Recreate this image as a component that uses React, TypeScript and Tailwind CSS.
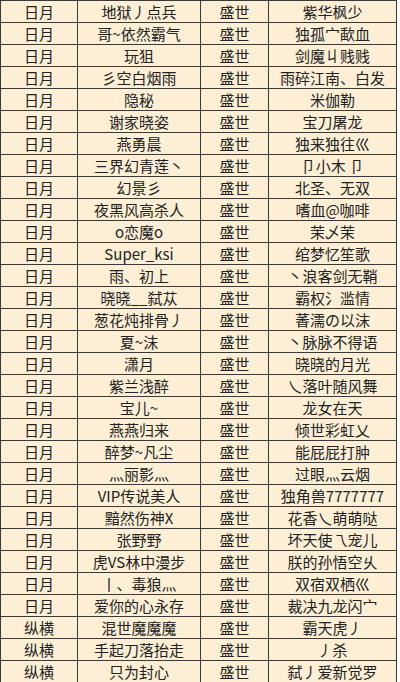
const rows: [string, string, string, string][] = [
  ['日月', '地狱丿点兵', '盛世', '紫华枫少'],
  ['日月', '哥~依然霸气', '盛世', '独孤宀歃血'],
  ['日月', '玩狙', '盛世', '剑魔丩贱贱'],
  ['日月', '彡空白烟雨', '盛世', '雨碎江南、白发'],
  ['日月', '隐秘', '盛世', '米伽勒'],
  ['日月', '谢家晓姿', '盛世', '宝刀屠龙'],
  ['日月', '燕勇晨', '盛世', '独来独往巛'],
  ['日月', '三界幻青莲丶', '盛世', '卩小木 卩'],
  ['日月', '幻景彡', '盛世', '北圣、无双'],
  ['日月', '夜黑风高杀人', '盛世', '嗜血@咖啡'],
  ['日月', 'o恋魔o', '盛世', '茉乄茉'],
  ['日月', 'Super_ksi', '盛世', '绾梦忆笙歌'],
  ['日月', '雨、初上', '盛世', '丶浪客剑无鞘'],
  ['日月', '晓晓__弑苁', '盛世', '霸权氵滥情'],
  ['日月', '葱花炖排骨丿', '盛世', '萫濡の以沫'],
  ['日月', '夏~沫', '盛世', '丶脉脉不得语'],
  ['日月', '潇月', '盛世', '晓晓的月光'],
  ['日月', '紫兰浅醉', '盛世', '乀落叶随风舞'],
  ['日月', '宝儿~', '盛世', '龙女在天'],
  ['日月', '燕燕归来', '盛世', '倾世彩虹乂'],
  ['日月', '醉梦~凡尘', '盛世', '能屁屁打肿'],
  ['日月', '灬丽影灬', '盛世', '过眼灬云烟'],
  ['日月', 'VIP传说美人', '盛世', '独角兽7777777'],
  ['日月', '黯然伤神X', '盛世', '花香乀萌萌哒'],
  ['日月', '张野野', '盛世', '坏天使乁宠儿'],
  ['日月', '虎VS林中漫步', '盛世', '朕的孙悟空乆'],
  ['日月', '丨、毒狼灬', '盛世', '双宿双栖巛'],
  ['日月', '爱你的心永存', '盛世', '裁决九龙闪宀'],
  ['纵横', '混世魔魔魔', '盛世', '霸天虎丿'],
  ['纵横', '手起刀落抬走', '盛世', '丿杀'],
  ['纵横', '只为封心', '盛世', '弑丿爱新觉罗'],
]

export default function App() {
  return (
    <div className="w-[400px] h-[682px] overflow-hidden bg-white font-['Noto_Sans_CJK_SC',sans-serif] text-[15px] text-[#222]">
      <table className="table-fixed border-collapse bg-[#fcefd6] w-[396px]">
        <colgroup>
          <col className="w-[77px]" />
          <col className="w-[123px]" />
          <col className="w-[68px]" />
          <col className="w-[128px]" />
        </colgroup>
        <tbody>
          {rows.map((r, i) => (
            <tr key={i} className="h-[22px]">
              {r.map((c, j) => (
                <td
                  key={j}
                  className="border border-[#3a3a3a] p-0 text-center leading-[20px] whitespace-nowrap"
                >
                  {c}
                </td>
              ))}
            </tr>
          ))}
        </tbody>
      </table>
    </div>
  )
}
